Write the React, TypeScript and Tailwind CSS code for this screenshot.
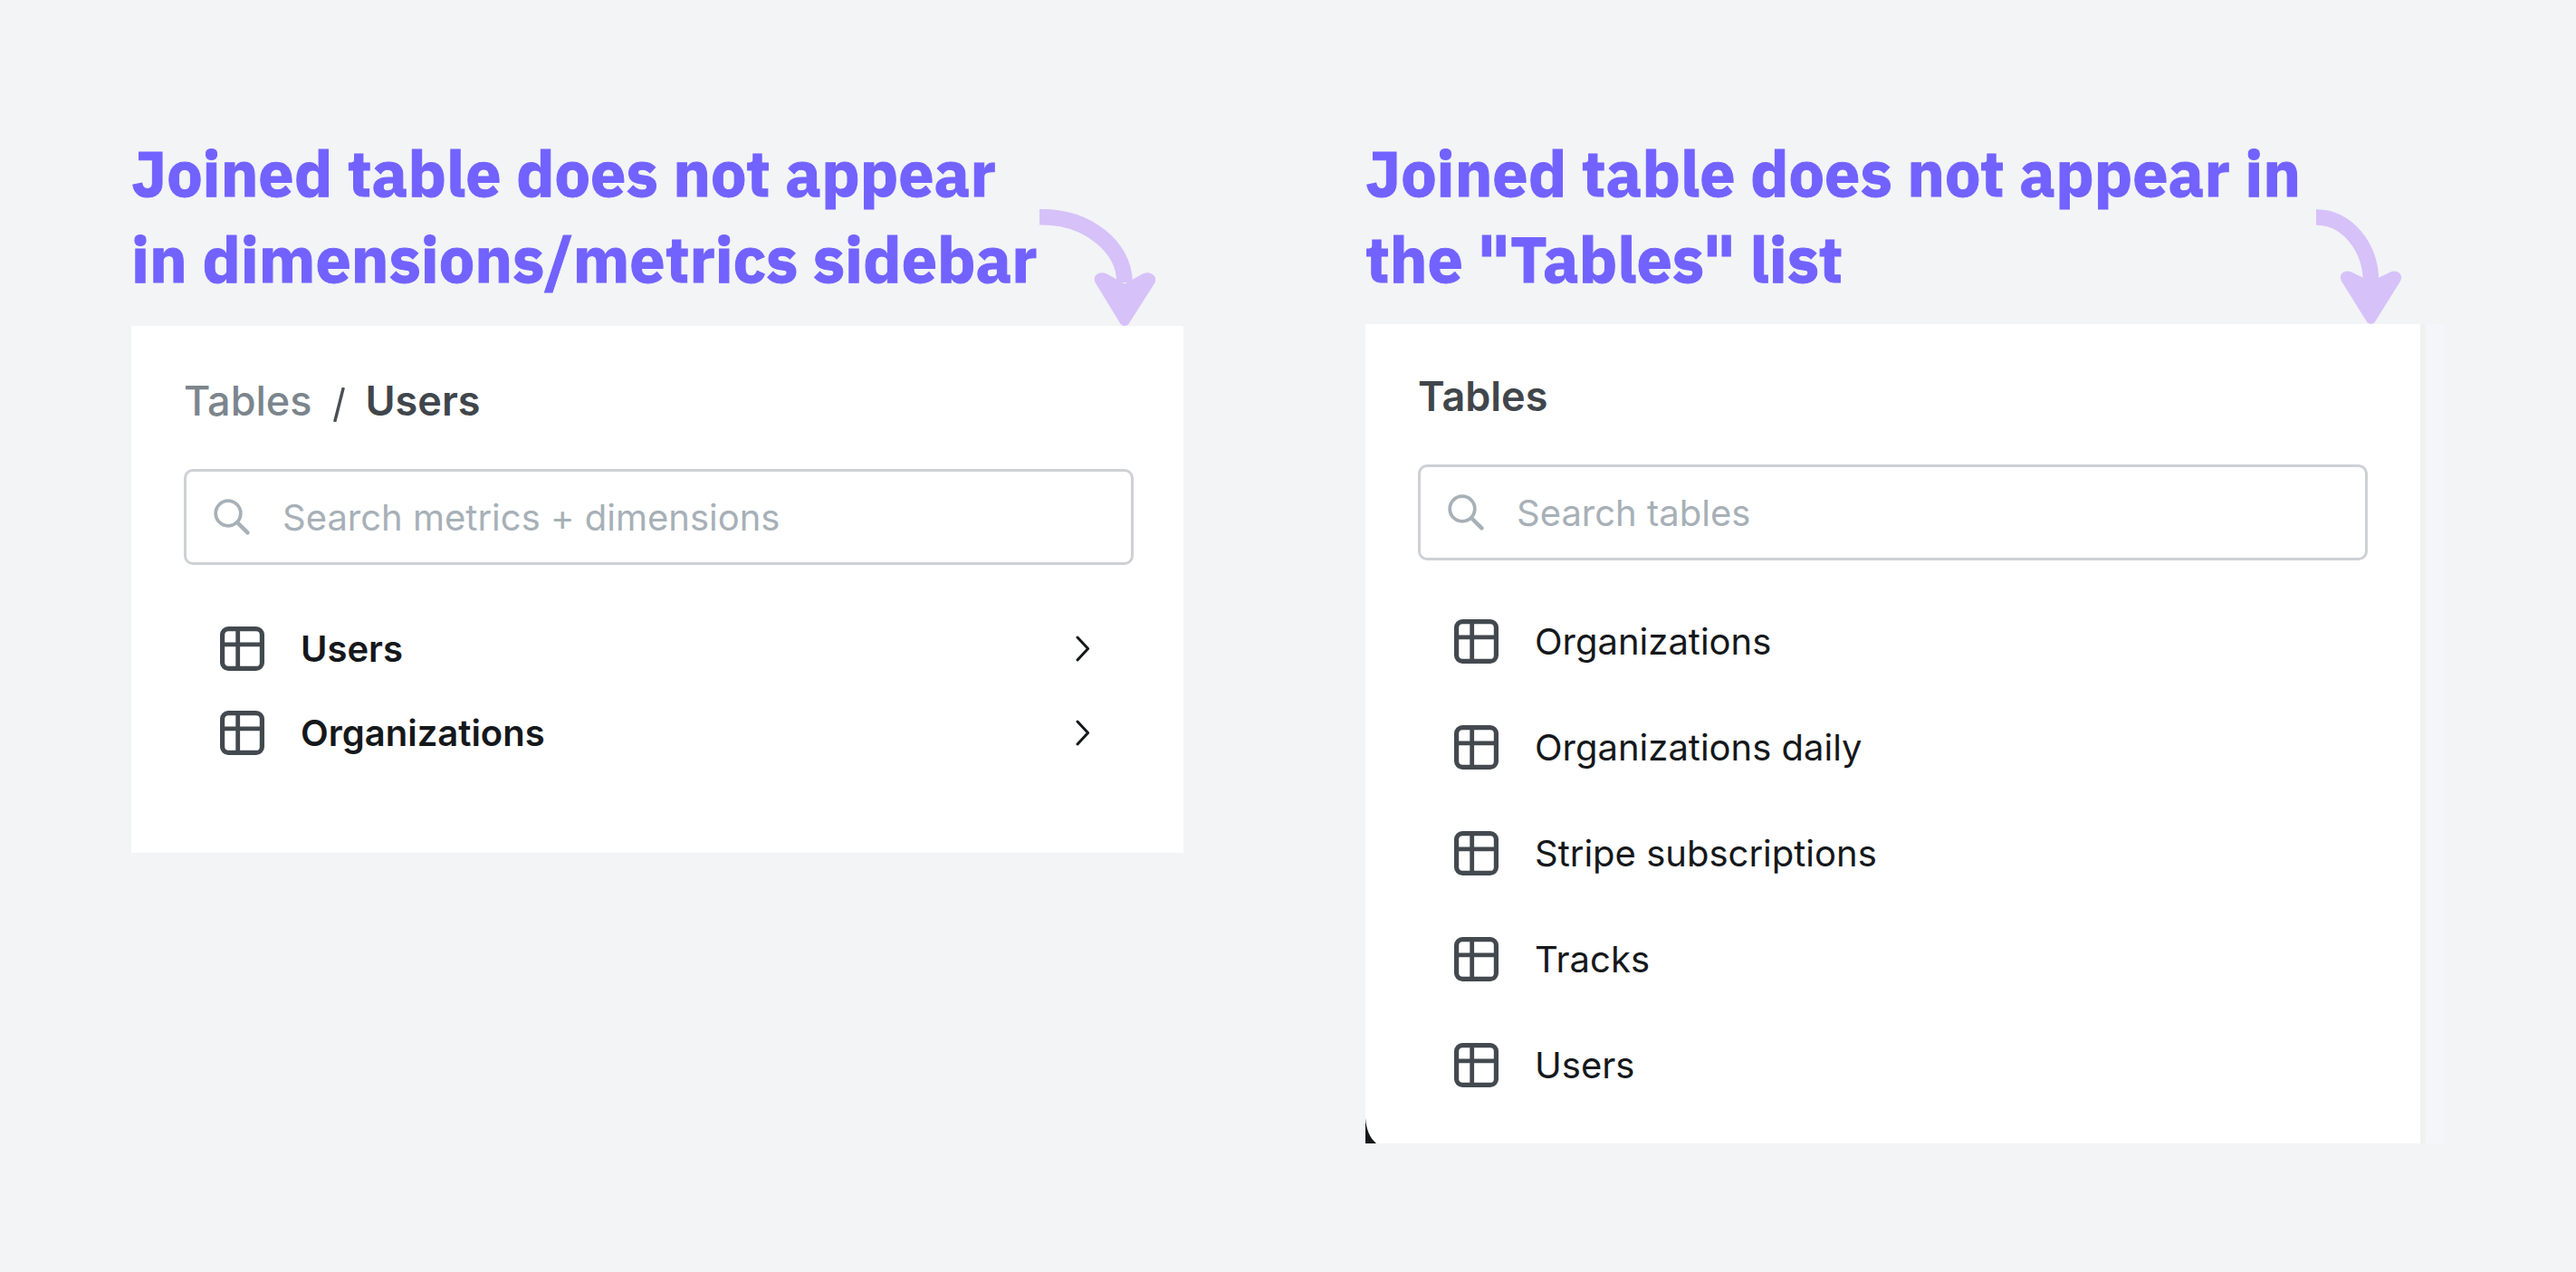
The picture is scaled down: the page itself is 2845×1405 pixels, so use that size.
import { useId, type ReactNode } from "react";

function TableIcon() {
  return (
    <svg className="size-[49px] shrink-0" viewBox="0 0 49 49" fill="none" stroke="#43494f" aria-hidden="true">
      <rect x="2.6" y="2.6" width="43.8" height="43.8" rx="6.5" strokeWidth="5.2" />
      <path d="M19.7 2.6V46.4M2.6 19.8H46.4" strokeWidth="4.8" />
    </svg>
  );
}

function SearchIcon() {
  return (
    <svg className="size-10 shrink-0" viewBox="0 0 40 40" fill="none" stroke="#a7b0b7" aria-hidden="true">
      <circle cx="16" cy="16" r="13.8" strokeWidth="3.8" />
      <path d="M26.2 26.2L37.4 37.4" strokeWidth="4.4" strokeLinecap="round" />
    </svg>
  );
}

function ChevronIcon() {
  return (
    <svg className="h-[29px] w-4 shrink-0" viewBox="0 0 16 29" fill="none" stroke="#15181b" aria-hidden="true">
      <path d="M2 2L13.6 14.5L2 27" strokeWidth="3" strokeLinecap="round" strokeLinejoin="round" />
    </svg>
  );
}

function WideArrow() {
  return (
    <svg className="h-[130px] w-32 shrink-0" viewBox="0 0 128 130" aria-hidden="true">
      <path d="M0 9.8C52 8.6 94 42 94 82" fill="none" stroke="#d6c1f9" strokeWidth="17.6" />
      <path
        d="M94 83.500L114 72.600C122 68.400 131.500 75 127.200 82.800L99.200 126.800C97 131 91.300 131 88.900 126.800L62 82.800C57.400 75 65.800 68.400 74.500 72.600Z"
        fill="#d6c1f9"
      />
    </svg>
  );
}

function NarrowArrow() {
  return (
    <svg className="h-[127px] w-24 shrink-0" viewBox="0 0 96 127" aria-hidden="true">
      <path d="M0 9C34 8.500 60.500 42 60.500 80" fill="none" stroke="#d6c1f9" strokeWidth="17.6" />
      <path
        d="M60.500 80L82 69.500C89.500 66 97 72.500 92.900 79.700L65.300 124C63 127.600 58 127.600 55.700 124L28.100 79.700C24 72.500 31 66 39 69.500Z"
        fill="#d6c1f9"
      />
    </svg>
  );
}

function Callout({ children, arrow }: { children: ReactNode; arrow: ReactNode }) {
  return (
    <header className="flex items-start justify-between">
      <h2 className="text-[70px] leading-[95px] font-bold whitespace-nowrap text-[#7262ff] font-['IBM_Plex_Sans','Roboto',sans-serif] [-webkit-text-stroke:1px_#7262ff]">
        {children}
      </h2>
      {arrow}
    </header>
  );
}

function SearchBox({ label }: { label: string }) {
  const id = useId();
  return (
    <div className="flex h-[106px] items-center gap-9 rounded-[10px] border-[3px] border-[#cdd1d6] pr-6 pl-[30px]">
      <label htmlFor={id} aria-label={label}>
        <SearchIcon />
      </label>
      <input
        id={id}
        type="search"
        placeholder={label}
        className="h-full min-w-0 flex-1 bg-transparent text-[40px] text-[#15181b] outline-none placeholder:text-[#a7b0b7]"
      />
    </div>
  );
}

const joined = ["Users", "Organizations"];
const tables = ["Organizations", "Organizations daily", "Stripe subscriptions", "Tracks", "Users"];

export default function App() {
  return (
    <main className="grid min-h-screen grid-cols-[1162fr_1192fr] items-start gap-[201px] bg-[#f2f4f6] px-[145px] pt-[143px] pb-20 font-['Inter',sans-serif] text-[#15181b]">
      <section>
        <div className="pr-[31px]">
          <Callout
            arrow={
              <div className="pt-[87px]">
                <WideArrow />
              </div>
            }
          >
            Joined table does not appear
            <br />
            in dimensions/metrics sidebar
          </Callout>
        </div>
        <div className="bg-white pt-[53px] pr-[55px] pb-[86px] pl-[58px]">
          <nav className="flex h-[60px] items-center text-[45px] leading-[60px]" aria-label="Breadcrumb">
            <a href="#tables" className="font-medium text-[#7c858c]">
              Tables
            </a>
            <svg className="mt-2 ml-6 h-[38px] w-[13px]" viewBox="0 0 13 38" aria-hidden="true">
              <path d="M11.300 0L1.700 38" stroke="#4a4f55" strokeWidth="3.400" />
            </svg>
            <span className="ml-[22px] font-semibold text-[#40464b]">Users</span>
          </nav>
          <div className="mt-[45px]">
            <SearchBox label="Search metrics + dimensions" />
          </div>
          <ul className="mt-[46px] px-10">
            {joined.map((name) => (
              <li key={name}>
                <button type="button" className="flex h-[93px] w-full items-center text-left">
                  <TableIcon />
                  <span className="ml-10 flex-1 text-[40px] leading-[50px] font-semibold">{name}</span>
                  <span className="mr-2">
                    <ChevronIcon />
                  </span>
                </button>
              </li>
            ))}
          </ul>
        </div>
      </section>

      <section>
        <div className="pr-[46px]">
          <Callout
            arrow={
              <div className="pt-[88px]">
                <NarrowArrow />
              </div>
            }
          >
            Joined table does not appear in
            <br />
            the "Tables" list
          </Callout>
        </div>
        <div className="flex">
          <div className="relative flex-1 bg-white px-[58px] pt-[50px] pb-7">
            <h3 className="text-[45px] leading-[60px] font-semibold text-[#40464b]">Tables</h3>
            <div className="mt-[45px]">
              <SearchBox label="Search tables" />
            </div>
            <ul className="mt-[31px] px-10">
              {tables.map((name) => (
                <li key={name}>
                  <button type="button" className="flex h-[117px] w-full items-center text-left">
                    <TableIcon />
                    <span className="ml-10 text-[40px] leading-[50px]">{name}</span>
                  </button>
                </li>
              ))}
            </ul>
            <svg className="absolute bottom-0 left-0 h-7 w-3" viewBox="0 0 12 28" aria-hidden="true">
              <path d="M0 0C1 13 5 22 12 28H0Z" fill="#15181b" />
            </svg>
          </div>
          <div className="w-[6px] bg-[#f0f2f2]" />
          <div className="w-[21px] bg-[#f5f6f9]" />
        </div>
      </section>
    </main>
  );
}
